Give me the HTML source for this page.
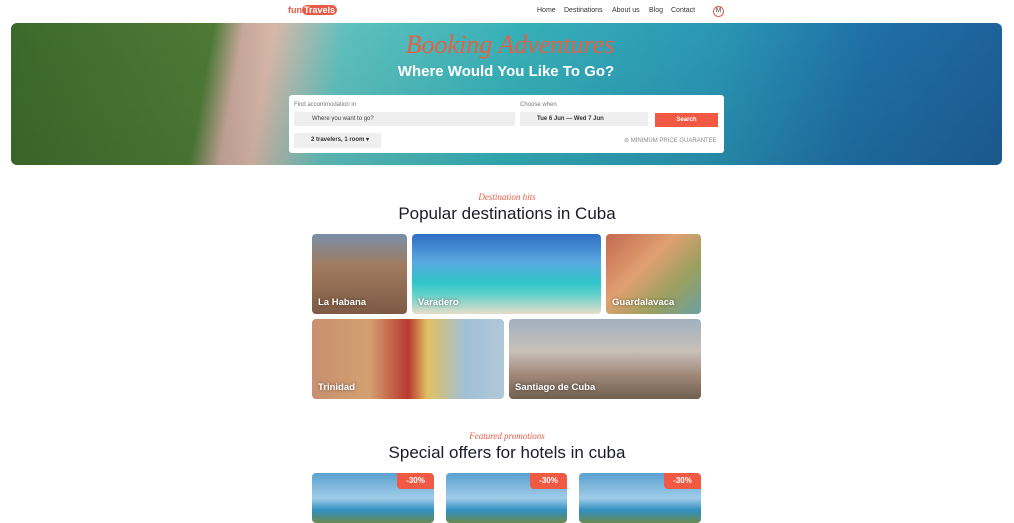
<!DOCTYPE html><html><head><style>
*{margin:0;padding:0;box-sizing:border-box}
body{width:1014px;height:515px;overflow:hidden;background:#fff;font-family:"Liberation Sans",sans-serif;color:#1a1a2a;position:relative}
.a{position:absolute}
.nav a{position:absolute;top:7px;font-size:7px;color:#333}
.card{position:absolute;border-radius:4px;overflow:hidden}
.card span{position:absolute;left:6px;bottom:6px;color:#fff;font-weight:bold;font-size:9.5px;text-shadow:0 0 3px rgba(0,0,0,.5)}
.script{font-family:"Liberation Serif",serif;font-style:italic;color:#e85a45}
h2{position:absolute;width:1014px;text-align:center;font-weight:normal;font-size:17px;color:#1a1a2a}
.badge{position:absolute;right:0;top:0;width:37px;height:16px;background:#f05a45;color:#fff;font-size:8px;font-weight:bold;text-align:center;line-height:16px;border-radius:0 4px 0 4px}
</style></head><body>
<div class="a" style="left:288px;top:5px;font-size:9px;font-weight:bold;color:#e85a45">fun<span style="background:#e85a45;color:#fff;border-radius:5px;padding:0 2px">Travels</span></div>
<div class="nav"><a style="left:537px">Home</a><a style="left:564px">Destinations</a><a style="left:612px">About us</a><a style="left:649px">Blog</a><a style="left:671px">Contact</a></div>
<div class="a" style="left:713px;top:6px;width:11px;height:11px;border:1px solid #e85a45;border-radius:50%;font-size:6px;text-align:center;line-height:9px">M</div>
<div class="a" style="left:11px;top:23px;width:991px;height:142px;border-radius:6px;overflow:hidden;background:linear-gradient(100deg,#3b6a2c 0%,#4d7a35 20%,#c9a89c 23%,#d8b8a8 26%,#5fc0bd 33%,#36b0b8 50%,#2a96b4 70%,#1f6fa6 85%,#1d5f98 100%)">
<div class="a" style="left:0;top:0;width:991px;height:142px;background:linear-gradient(180deg,rgba(255,255,255,0) 0,rgba(0,0,0,.08) 100%)"></div>
</div>
<div class="a script" style="left:390px;top:30px;width:240px;text-align:center;font-size:26px;color:#e86040">Booking Adventures</div>
<div class="a" style="left:300px;top:63px;width:412px;text-align:center;font-size:15px;font-weight:bold;color:#fff">Where Would You Like To Go?</div>
<div class="a" style="left:289px;top:95px;width:435px;height:58px;background:#fff;border-radius:3px">
<div class="a" style="left:5px;top:7px;font-size:6px;color:#777">Find accommodation in</div>
<div class="a" style="left:5px;top:17px;width:221px;height:14px;background:#f0eff0;font-size:6px;line-height:14px;padding-left:18px;color:#444">Where you want to go?</div>
<div class="a" style="left:231px;top:7px;font-size:6px;color:#777">Choose when</div>
<div class="a" style="left:231px;top:17px;width:128px;height:14px;background:#f0eff0;font-size:6px;line-height:14px;padding-left:17px;font-weight:bold;color:#333">Tue 6 Jun — Wed 7 Jun</div>
<div class="a" style="left:366px;top:18px;width:63px;height:14px;background:#f05a45;color:#fff;font-size:6px;font-weight:bold;text-align:center;line-height:14px">Search</div>
<div class="a" style="left:5px;top:38px;width:87px;height:15px;background:#f0eff0;font-size:6px;line-height:15px;padding-left:17px;font-weight:bold;color:#333">2 travelers, 1 room ▾</div>
<div class="a" style="left:335px;top:42px;font-size:6px;color:#888">⊘ MINIMUM PRICE GUARANTEE</div>
</div>
<div class="a script" style="left:0;width:1014px;text-align:center;top:192px;font-size:9px">Destination hits</div>
<h2 style="top:204px">Popular destinations in Cuba</h2>
<div class="card" style="left:312px;top:234px;width:95px;height:80px;background:linear-gradient(180deg,#7a8fa8 0,#a07a5e 40%,#7e5a45 100%)"><span>La Habana</span></div>
<div class="card" style="left:412px;top:234px;width:189px;height:80px;background:linear-gradient(180deg,#2f6fc4 0,#5aa8e0 35%,#2ec4c8 60%,#5fd0cc 75%,#e6ddc8 100%)"><span>Varadero</span></div>
<div class="card" style="left:606px;top:234px;width:95px;height:80px;background:linear-gradient(135deg,#c46850 0,#e0a070 40%,#9aa060 70%,#6aa0a0 100%)"><span>Guardalavaca</span></div>
<div class="card" style="left:312px;top:319px;width:192px;height:80px;background:linear-gradient(90deg,#c89070 0,#d4a070 30%,#b83830 50%,#e0c060 60%,#a0c0d8 80%,#b0c8d8 100%)"><span>Trinidad</span></div>
<div class="card" style="left:509px;top:319px;width:192px;height:80px;background:linear-gradient(180deg,#a0b0c0 0,#c8c0b8 40%,#a08878 70%,#706050 100%)"><span>Santiago de Cuba</span></div>
<div class="a script" style="left:0;width:1014px;text-align:center;top:431px;font-size:9px">Featured promotions</div>
<h2 style="top:443px">Special offers for hotels in cuba</h2>
<div class="card" style="left:312px;top:473px;width:122px;height:50px;background:linear-gradient(180deg,#5aa0d0 0,#a0cce8 50%,#3090c0 75%,#6a8a50 100%)"><div class="badge">-30%</div></div>
<div class="card" style="left:446px;top:473px;width:121px;height:50px;background:linear-gradient(180deg,#5aa0d0 0,#a0cce8 50%,#3090c0 75%,#6a8a50 100%)"><div class="badge">-30%</div></div>
<div class="card" style="left:579px;top:473px;width:122px;height:50px;background:linear-gradient(180deg,#5aa0d0 0,#a0cce8 50%,#3090c0 75%,#6a8a50 100%)"><div class="badge">-30%</div></div>
</body></html>
